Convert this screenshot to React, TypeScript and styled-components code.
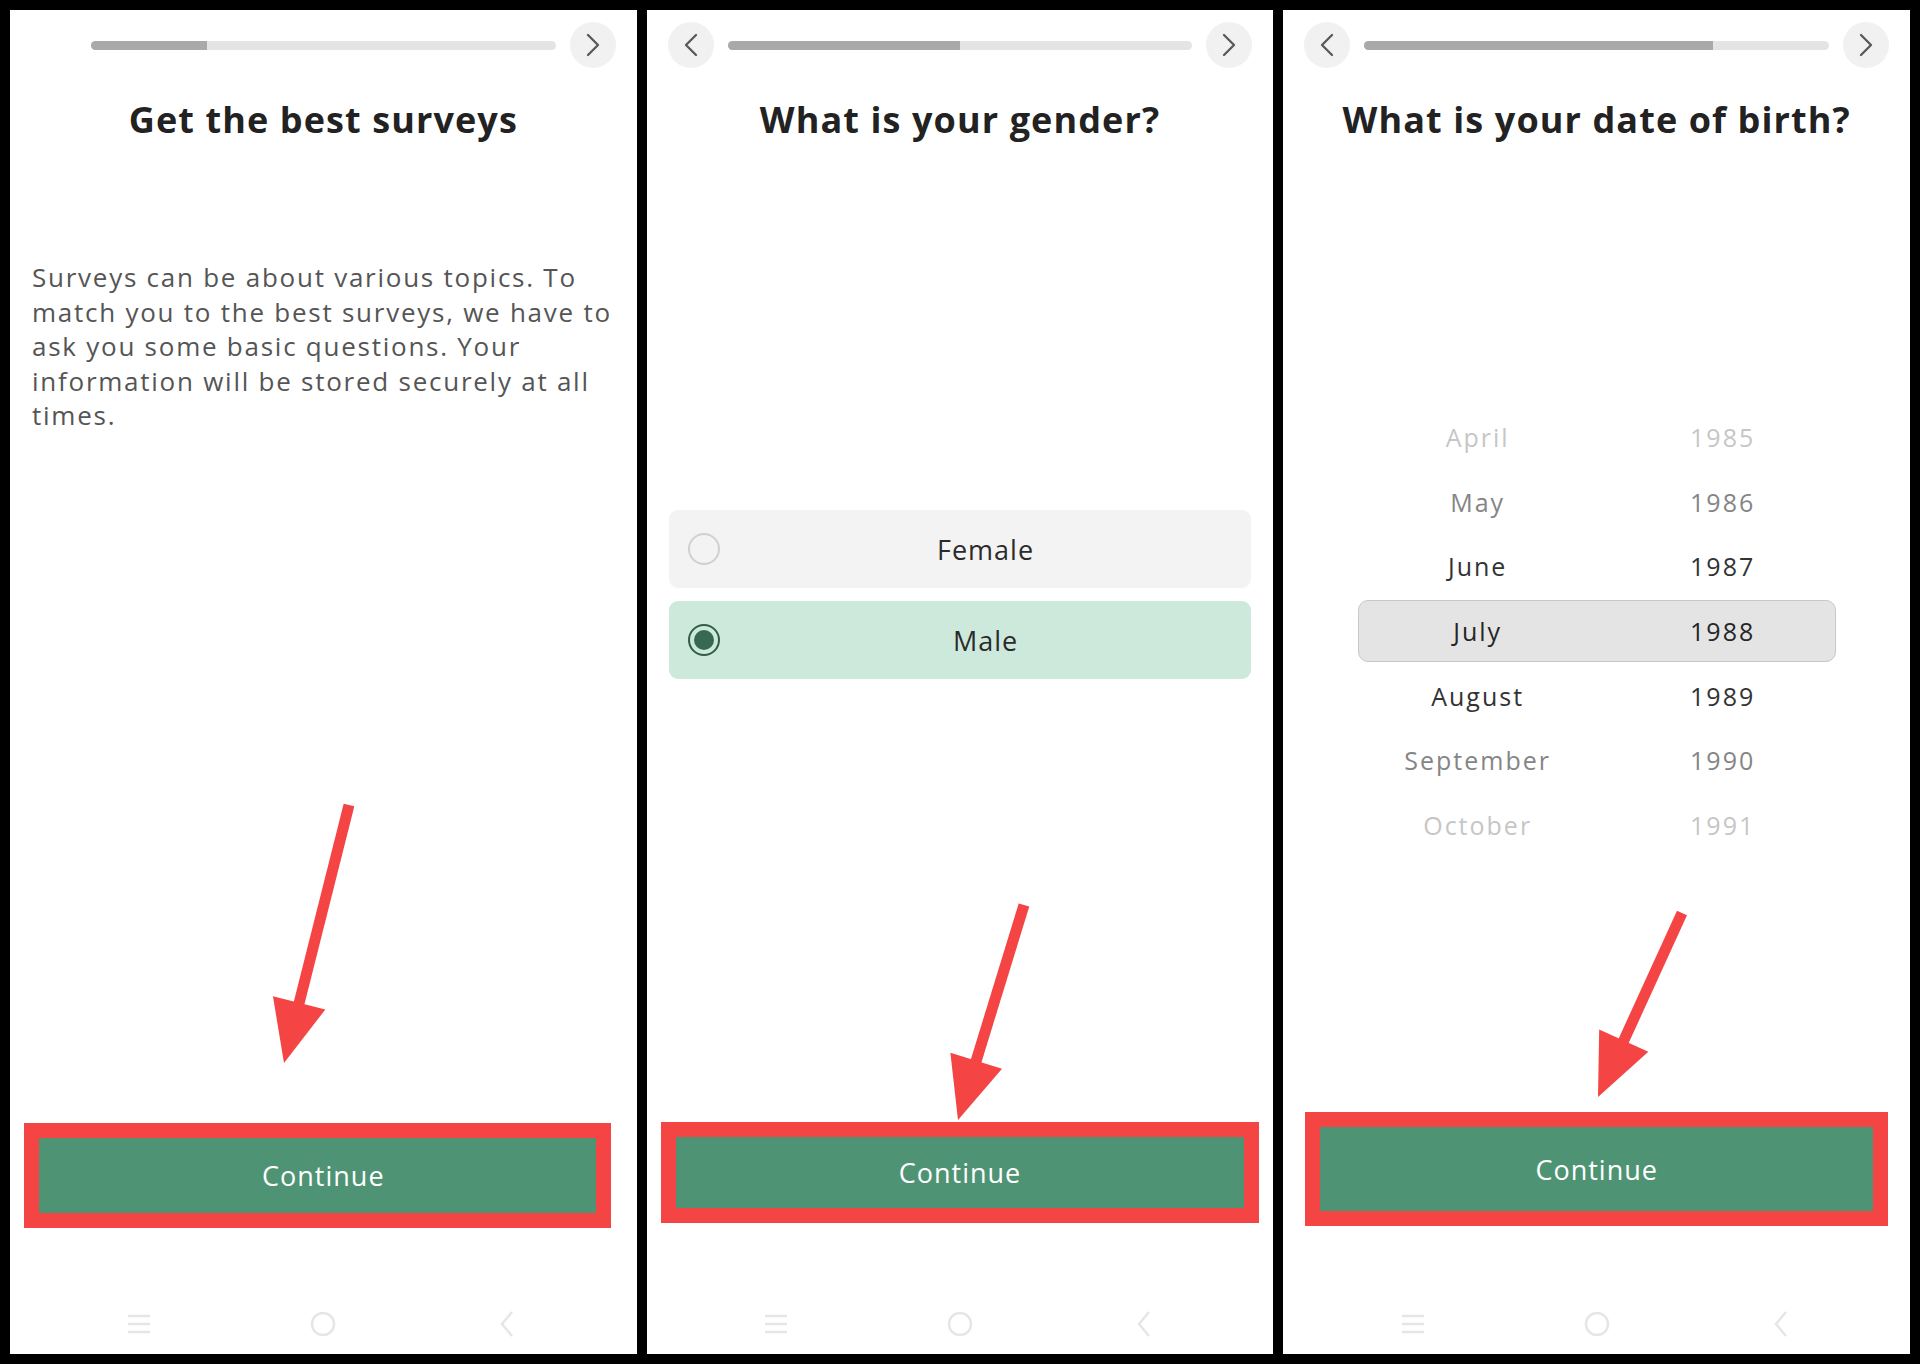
import React from "react";
import styled, { createGlobalStyle } from "styled-components";
import { ChevronLeft, ChevronRight } from "lucide-react";

const GlobalStyle = createGlobalStyle`
  html, body {
    margin: 0;
    padding: 0;
    background: #000;
  }
  body {
    font-family: "Open Sans", "Noto Sans", sans-serif;
  }
  * {
    box-sizing: border-box;
  }
`;

const Page = styled.div`
  display: flex;
  gap: 10px;
  padding: 10px;
  width: 1920px;
  height: 1364px;
  background: #000;
`;

const Screen = styled.div`
  position: relative;
  flex: 1;
  height: 1344px;
  background: #fff;
  display: flex;
  flex-direction: column;
  overflow: hidden;
`;

const Header = styled.div`
  display: flex;
  align-items: center;
  gap: 14px;
  padding: 12px 21px 0;
`;

const NavCircle = styled.button<{ $hidden?: boolean }>`
  width: 46px;
  height: 46px;
  flex-shrink: 0;
  border-radius: 50%;
  border: none;
  padding: 0;
  background: #f1f1f1;
  color: #5a5a5a;
  display: flex;
  align-items: center;
  justify-content: center;
  visibility: ${(p) => (p.$hidden ? "hidden" : "visible")};
`;

const Track = styled.div`
  flex: 1;
  height: 9px;
  border-radius: 5px;
  background: #e4e4e4;
  overflow: hidden;
`;

const Fill = styled.div`
  height: 100%;
  background: #a9a9a9;
`;

const Title = styled.h1`
  margin: 31px 0 0;
  text-align: center;
  font-size: 36px;
  line-height: 42px;
  font-weight: 700;
  letter-spacing: 1.1px;
  color: #222;
`;

const Body = styled.div<{ $top: number }>`
  flex: 1;
  display: flex;
  flex-direction: column;
  padding-top: ${(p) => p.$top}px;
`;

const Intro = styled.p`
  margin: 0;
  padding: 0 20px 0 22px;
  font-size: 26px;
  line-height: 34.5px;
  color: #555;
  letter-spacing: 1.75px;
  white-space: nowrap;
`;

const OptionList = styled.div`
  display: flex;
  flex-direction: column;
  gap: 13px;
  padding: 0 22px;
`;

const Option = styled.div<{ $selected?: boolean }>`
  height: 78px;
  border-radius: 9px;
  background: ${(p) => (p.$selected ? "#cde9dc" : "#f3f3f3")};
  display: flex;
  align-items: center;
  padding-left: 19px;
`;

const Radio = styled.span<{ $checked?: boolean }>`
  width: 32px;
  height: 32px;
  flex-shrink: 0;
  border-radius: 50%;
  border: 2px solid ${(p) => (p.$checked ? "#2e5e47" : "#d0d0d0")};
  display: flex;
  align-items: center;
  justify-content: center;

  &::after {
    content: "";
    display: ${(p) => (p.$checked ? "block" : "none")};
    width: 20px;
    height: 20px;
    border-radius: 50%;
    background: #356a50;
  }
`;

const OptionLabel = styled.span`
  flex: 1;
  text-align: center;
  font-size: 27px;
  letter-spacing: 1px;
  color: #2b2b2b;
`;

const Picker = styled.div`
  width: 478px;
  margin: 0 auto;
  display: flex;
  flex-direction: column;
`;

const levelColors = ["#262626", "#333333", "#858585", "#c6c6c6"];

const PickerRow = styled.div<{ $level: number }>`
  display: grid;
  grid-template-columns: 1fr 1fr;
  align-items: center;
  height: ${(p) => (p.$level === 0 ? 62.6 : 64.6)}px;
  margin: ${(p) => (p.$level === 0 ? "1px 0" : "0")};
  border-radius: 10px;
  border: 1px solid ${(p) => (p.$level === 0 ? "#c8c8c8" : "transparent")};
  background: ${(p) => (p.$level === 0 ? "#e4e4e4" : "transparent")};
  color: ${(p) => levelColors[p.$level]};
  font-size: 25px;
  letter-spacing: 2px;
  text-align: center;
`;

const Year = styled.span`
  padding-left: 14px;
`;

const ButtonFrame = styled.div<{ $left: number; $right: number; $bottom: number }>`
  margin: 0 ${(p) => p.$right}px ${(p) => p.$bottom}px ${(p) => p.$left}px;
  border: 15px solid #f44444;
`;

const ContinueButton = styled.button<{ $height: number; $shift?: number }>`
  display: block;
  width: 100%;
  height: ${(p) => p.$height}px;
  padding: 0 0 0 ${(p) => p.$shift ?? 0}px;
  border: none;
  background: #4e9474;
  color: #fff;
  font-family: "Open Sans", sans-serif;
  font-size: 27px;
  letter-spacing: 1px;
`;

const SystemBar = styled.div`
  height: 60px;
  display: flex;
  align-items: center;
  justify-content: center;
  gap: 144px;
`;

const SysIcon = styled.div`
  width: 40px;
  height: 40px;
  display: flex;
  align-items: center;
  justify-content: center;
`;

const Overlay = styled.svg`
  position: absolute;
  inset: 0;
  width: 100%;
  height: 100%;
  pointer-events: none;
`;

type Pt = [number, number];

const Arrow = ({ from, tip }: { from: Pt; tip: Pt }) => {
  const dx = tip[0] - from[0];
  const dy = tip[1] - from[1];
  const len = Math.hypot(dx, dy);
  const ux = dx / len;
  const uy = dy / len;
  const head = 62;
  const half = 27;
  const bx = tip[0] - ux * head;
  const by = tip[1] - uy * head;
  const p1 = `${bx - uy * half},${by + ux * half}`;
  const p2 = `${bx + uy * half},${by - ux * half}`;
  return (
    <g>
      <line x1={from[0]} y1={from[1]} x2={bx + ux * 4} y2={by + uy * 4} stroke="#f44444" strokeWidth={11} />
      <polygon points={`${p1} ${tip[0]},${tip[1]} ${p2}`} fill="#f44444" />
    </g>
  );
};

const SystemNav = () => (
  <SystemBar>
    <SysIcon>
      <svg width="26" height="24" viewBox="0 0 26 24">
        <g stroke="#e6e6e6" strokeWidth="2.5">
          <line x1="2" y1="4" x2="24" y2="4" />
          <line x1="2" y1="12" x2="24" y2="12" />
          <line x1="2" y1="20" x2="24" y2="20" />
        </g>
      </svg>
    </SysIcon>
    <SysIcon>
      <svg width="28" height="28" viewBox="0 0 28 28">
        <circle cx="14" cy="14" r="11" fill="none" stroke="#e6e6e6" strokeWidth="2.5" />
      </svg>
    </SysIcon>
    <SysIcon>
      <svg width="20" height="28" viewBox="0 0 20 28">
        <polyline points="15,2 5,14 15,26" fill="none" stroke="#e6e6e6" strokeWidth="2.5" />
      </svg>
    </SysIcon>
  </SystemBar>
);

const TopBar = ({ progress, showBack }: { progress: number; showBack: boolean }) => (
  <Header>
    <NavCircle $hidden={!showBack}>
      <ChevronLeft size={40} strokeWidth={1.4} />
    </NavCircle>
    <Track>
      <Fill style={{ width: `${progress}%` }} />
    </Track>
    <NavCircle>
      <ChevronRight size={40} strokeWidth={1.4} />
    </NavCircle>
  </Header>
);

const dates: { month: string; year: number; level: number }[] = [
  { month: "April", year: 1985, level: 3 },
  { month: "May", year: 1986, level: 2 },
  { month: "June", year: 1987, level: 1 },
  { month: "July", year: 1988, level: 0 },
  { month: "August", year: 1989, level: 1 },
  { month: "September", year: 1990, level: 2 },
  { month: "October", year: 1991, level: 3 },
];

export default function App() {
  return (
    <>
      <GlobalStyle />
      <Page>
        <Screen>
          <TopBar progress={25} showBack={false} />
          <Title>Get the best surveys</Title>
          <Body $top={119}>
            <Intro>
              Surveys can be about various topics. To
              <br />
              match you to the best surveys, we have to
              <br />
              ask you some basic questions. Your
              <br />
              information will be stored securely at all
              <br />
              times.
            </Intro>
          </Body>
          <ButtonFrame $left={14} $right={26} $bottom={66}>
            <ContinueButton $height={75} $shift={12}>
              Continue
            </ContinueButton>
          </ButtonFrame>
          <SystemNav />
          <Overlay>
            <Arrow from={[339, 795]} tip={[274, 1053]} />
          </Overlay>
        </Screen>

        <Screen>
          <TopBar progress={50} showBack />
          <Title>What is your gender?</Title>
          <Body $top={369}>
            <OptionList>
              <Option>
                <Radio />
                <OptionLabel>Female</OptionLabel>
              </Option>
              <Option $selected>
                <Radio $checked />
                <OptionLabel>Male</OptionLabel>
              </Option>
            </OptionList>
          </Body>
          <ButtonFrame $left={14} $right={14} $bottom={71}>
            <ContinueButton $height={71}>Continue</ContinueButton>
          </ButtonFrame>
          <SystemNav />
          <Overlay>
            <Arrow from={[377, 895]} tip={[311, 1110]} />
          </Overlay>
        </Screen>

        <Screen>
          <TopBar progress={75} showBack />
          <Title>What is your date of birth?</Title>
          <Body $top={264}>
            <Picker>
              {dates.map((d) => (
                <PickerRow key={d.month} $level={d.level}>
                  <span>{d.month}</span>
                  <Year>{d.year}</Year>
                </PickerRow>
              ))}
            </Picker>
          </Body>
          <ButtonFrame $left={22} $right={22} $bottom={68}>
            <ContinueButton $height={84}>Continue</ContinueButton>
          </ButtonFrame>
          <SystemNav />
          <Overlay>
            <Arrow from={[399, 903]} tip={[315, 1087]} />
          </Overlay>
        </Screen>
      </Page>
    </>
  );
}
